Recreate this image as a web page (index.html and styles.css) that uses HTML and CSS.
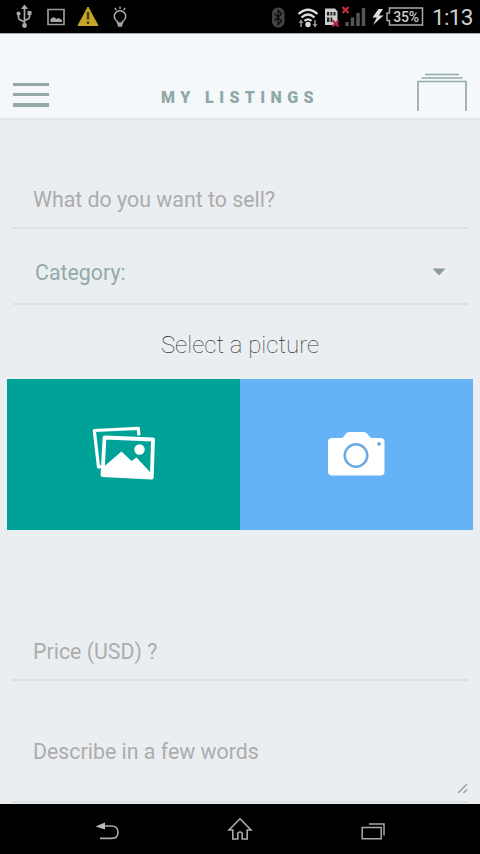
FILE: index.html
```html
<!DOCTYPE html>
<html lang="en">
<head>
<meta charset="utf-8">
<title>My Listings</title>
<link rel="stylesheet" href="styles.css">
</head>
<body>
<div class="screen">
  <div class="status">
    <div class="status-group notices">
      <svg width="18" height="33" viewBox="15 0 18 33" fill="none" stroke="#aaa" stroke-width="1.7"><path d="M24.5 8v17M18.500 14v3.500q0 2 2 2.500l4 2M29.500 12v5q0 1.500-1.500 2l-3.500 1.500"/><path d="M24.500 4.500l3.500 4.500h-7z" fill="#aaa" stroke="none"/><circle cx="24.500" cy="25.500" r="2.400" fill="#aaa" stroke="none"/><circle cx="18.500" cy="13.500" r="2" fill="#aaa" stroke="none"/><path d="M27.500 11h4v4h-4z" fill="#aaa" stroke="none"/></svg>
      <svg width="18" height="33" viewBox="47 0 18 33"><path d="M48 9.500h16v15H48z" fill="none" stroke="#999" stroke-width="1.700"/><path d="M50.500 22v-3l3-2 3 2 2-1 3.500 2v2z" fill="#aaa"/></svg>
      <svg width="22" height="33" viewBox="77 0 22 33"><path d="M88 7l10 18.500H78z" fill="#c5a526" stroke="#c5a526" stroke-width="1" stroke-linejoin="round"/><path d="M88 12v7.500M88 21.500v2.500" stroke="#493d12" stroke-width="2.400"/></svg>
      <svg width="16" height="33" viewBox="112 0 16 33" fill="none" stroke="#aaa" stroke-width="1.500"><path d="M117.500 23v-1.500a5.700 5.700 0 1 1 5 0V23zM118 26h4M115 8l1.200 2M120 6.500v2.500M125 8l-1.200 2"/><path d="M117.500 24.500h5" stroke-width="2.500"/></svg>
    </div>
    <div class="status-group signals">
      <svg class="bt" width="14" height="33" viewBox="271 0 14 33"><rect x="272" y="7.500" width="12.500" height="20" rx="6" fill="#444"/><path d="M274.500 13.500l7 7.500-3.300 3.500v-14l3.300 3.300-7 7" fill="none" stroke="#111" stroke-width="1.500"/></svg>
      <svg class="wifi" width="22" height="33" viewBox="297 0 22 33" fill="none" stroke="#ddd" stroke-width="2.200"><path d="M298.500 14q9.500-8.500 19 0M301.500 17.500q6.500-6 13 0M304.500 20.800q3.500-3 7 0"/><circle cx="308" cy="24.500" r="2.700" fill="#ddd" stroke="none"/><path d="M301 20v7M315 20v7" stroke="#999" stroke-width="1.500"/><path d="M298.500 23l2.500-3 2.500 3zM312.500 24l2.500 3 2.500-3z" fill="#999" stroke="none"/></svg>
      <svg class="sim" width="16" height="33" viewBox="324 0 16 33"><path d="M325 8.500h10l2.500 3V25H325z" fill="#ccc"/><path d="M327 12h2.300v3.500H327zM330.500 12h1.800v3.500h-1.800zM333.500 12h2v3.500h-2zM327 17.500h2.300V22H327zM330.500 17.500h1.800V22h-1.800z" fill="#222"/><path d="M332.500 20.500l6 6m0-6l-6 6" stroke="#b5263b" stroke-width="2.200"/></svg>
      <svg class="cell" width="25" height="33" viewBox="341 0 25 33"><path d="M347 22v4M352.500 17.500V26M358 13v13M363.500 8v18" stroke="#555" stroke-width="3.500"/><path d="M342.500 7l6 6m0-6l-6 6" stroke="#c32b3d" stroke-width="2.400"/></svg>
      <svg class="bolt" width="12" height="33" viewBox="372 0 12 33"><path d="M378.500 9l-6 8.500h4.300L373 25l10.500-9.500h-4.600L383 9z" fill="#ddd"/></svg>
      <div class="battery"><svg width="38" height="19" viewBox="386 7.500 38 19"><path d="M389.500 8.500h33v17h-33v-4.500h-2.500v-7.500h2.500z" fill="none" stroke="#aaa" stroke-width="1.500"/></svg><span>35%</span></div>
      <div class="time">1:13</div>
    </div>
  </div>

  <header class="header">
    <div class="menu"><i></i><i></i><i></i></div>
    <h1>MY LISTINGS</h1>
    <svg class="stack" width="50" height="39" viewBox="417 73 50 39" fill="none" stroke="#94aaa8" stroke-width="1.700"><path d="M425 74.500h34M421.500 78h41M418 111V81.500h48V111"/></svg>
  </header>

  <main class="form">
    <div class="field title"><span>What do you want to sell?</span></div>
    <div class="field category"><span>Category:</span><svg width="14" height="8" viewBox="0 0 14 8"><path d="M.5.500h13L7 7.500z" fill="#8d9a9b"/></svg></div>
    <h2>Select a picture</h2>
    <div class="pictures">
      <div class="tile gallery">
        <svg width="66" height="56" viewBox="91 426 66 56" fill="none" stroke="#fff"><path d="M102 466.500l-3.500.500-4.200-36.500 44-2.200.6 7" stroke-width="3.200" stroke-linejoin="round"/><path d="M104.500 437.500l48.500 2-1.200 38-49.300-2.500z" stroke-width="3.800" stroke-linejoin="round"/><path d="M104 475v-8l17.500-15 10 9.500 5-3.500 13 14-.5 5z" fill="#fff" stroke-width="1" stroke-linejoin="round"/><circle cx="139.500" cy="449.500" r="5.200" fill="#fff" stroke="none"/></svg>
      </div>
      <div class="tile camera">
        <svg width="58" height="46" viewBox="327 431 58 46"><path d="M332 438h9q2 0 3.200-2l1.300-2q1.500-2 4-2h14q2.500 0 4 2l1.500 2q1.300 2 3.500 2h8q4 0 4 4v29.500q0 4-4 4H332q-4 0-4-4V442q0-4 4-4z" fill="#fff"/><circle cx="356" cy="455.500" r="11.300" fill="none" stroke="#6baae1" stroke-width="2.500"/><circle cx="379" cy="443.800" r="1.900" fill="#6baae1"/></svg>
      </div>
    </div>
    <div class="field price"><span>Price (USD) ?</span></div>
    <div class="field describe"><span>Describe in a few words</span><svg width="11" height="11" viewBox="0 0 11 11" stroke="#999fa2" stroke-width="1.500"><path d="M1 10l9-9M6.500 10L10 6.500"/></svg></div>
  </main>

  <nav class="nav">
    <svg width="26" height="24" viewBox="94 818 26 24"><path d="M103 826h8.500q6.500 0 6.500 6.200t-6.500 6.200H100" fill="none" stroke="#aaa" stroke-width="1.600"/><path d="M95.500 826.500l9.500-4v7z" fill="#bbb"/></svg>
    <svg width="26" height="24" viewBox="227 818 26 24" fill="none" stroke="#aaa" stroke-width="1.600"><path d="M240 818.800l-11 11.200h3.800v9h5v-5q0-2 2.200-2t2.200 2v5h5v-9h3.800z"/></svg>
    <svg width="26" height="24" viewBox="359 818 26 24" fill="none" stroke="#aaa" stroke-width="1.500"><path d="M362.200 827.500h19v11.300h-19zM369 824h15v11.500"/></svg>
  </nav>
</div>
</body>
</html>
```
FILE: styles.css
```css
* { box-sizing: border-box; }
body { margin: 0; font-family: Roboto, "Liberation Sans", sans-serif; background: #eaeef1; }
svg { display: block; flex: none; }
.screen { width: 480px; height: 854px; display: flex; flex-direction: column; overflow: hidden; }

.status { height: 34px; background: #000; border-bottom: 1px solid #aaa; display: flex; justify-content: space-between; flex: none; }
.status-group { display: flex; align-items: center; }
.notices { padding-left: 15px; gap: 13px; }
.notices svg:nth-child(2) { margin-left: 1px; margin-right: -1px; }
.signals { width: 209px; }
.wifi { margin-left: 12px; }
.sim { margin-left: 5px; }
.cell { margin-left: 1px; }
.bolt { margin-left: 6px; }
.battery { display: grid; margin-left: 2px; align-items: center; justify-items: center; }
.battery > * { grid-area: 1 / 1; }
.battery span { color: #ccc; font-size: 14px; font-weight: 500; letter-spacing: -0.2px; padding-left: 2px; padding-top: 1px; }
.time { color: #d0d0d0; font-size: 22.500px; line-height: 33px; margin-left: 8px; letter-spacing: -0.7px; padding-top: 2px; }

.header { height: 86px; flex: none; background: #f5f8fa; border-bottom: 2px solid #e3e6e8; display: flex; justify-content: space-between; padding: 39px 13px 0; }
.menu { width: 36px; display: flex; flex-direction: column; gap: 7px; padding-top: 9.500px; }
.menu i { height: 3.400px; background: #94aaa8; }
h1 { margin: 13px 0 0; padding-left: 14px; font-size: 16px; line-height: 24px; font-weight: 900; letter-spacing: 5.400px; color: #8fa8a7; white-space: nowrap; }

.form { flex: 1; display: flex; flex-direction: column; }
.field { margin: 0 12px; padding: 0 22px; display: flex; align-items: flex-end; justify-content: space-between; border-bottom: 2px solid #dbe0e4; color: #acacad; font-size: 21.350px; line-height: 28px; flex: none; }
.title { height: 109px; padding-bottom: 13px; }
.title span, .price span, .describe span { margin-left: -1px; }
.category { height: 76px; margin-left: 13px; padding-bottom: 16px; color: #94aaa8; }
.category svg { margin-bottom: 11px; }
h2 { margin: 23px 0 0; text-align: center; font-size: 24px; line-height: 34px; font-weight: 100; color: #303335; }
.pictures { margin: 17px 7px 0; height: 151px; display: grid; grid-template-columns: 1fr 1fr; flex: none; }
.tile { display: grid; place-items: center; }
.gallery { background: #00a297; padding-bottom: 2px; }
.camera { background: #65b3f6; padding: 0 2px 2px 0; }
.price { margin-top: 91px; height: 60px; padding-bottom: 13px; }
.describe { height: 122px; align-items: flex-start; padding: 57px 0 0 22px; }
.describe svg { margin-top: 45px; }

.nav { height: 50px; flex: none; background: #000; display: flex; justify-content: space-between; align-items: center; padding: 2px 95px 0 94px; }
```
